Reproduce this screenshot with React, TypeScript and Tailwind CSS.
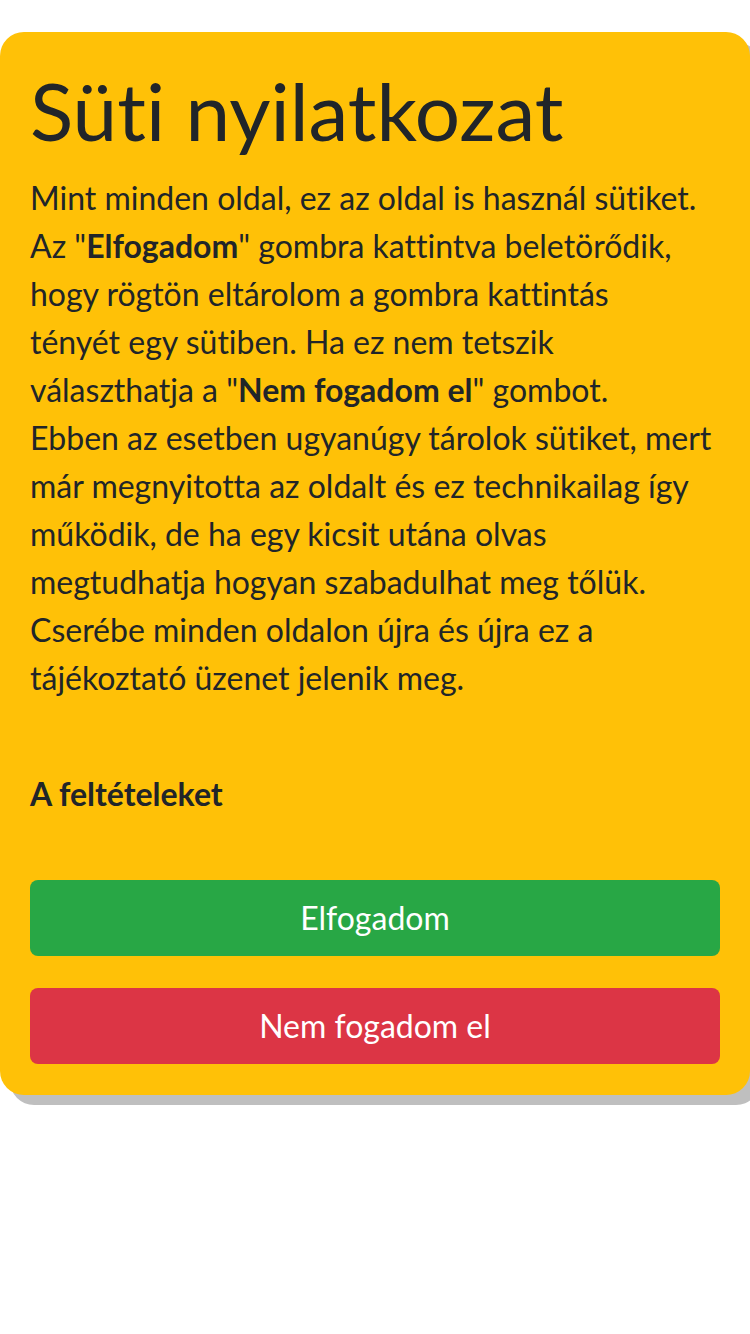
export default function App() {
  return (
    <div className="min-h-[1334px] bg-white pt-8 font-['Lato','Noto_Sans',sans-serif] text-[#212529] [font-variant-ligatures:none]">
      <div className="rounded-3xl bg-[#ffc107] px-[30px] pt-[30px] pb-[31px] shadow-[10px_10px_0_0_#bfbfbf]">
        <h1 className="mb-4 text-[80px] leading-[1.2] font-normal">Süti nyilatkozat</h1>
        <p className="mb-8 text-[32px] leading-[48px]">
          Mint minden oldal, ez az oldal is használ sütiket.
          <br />
          Az "<b>Elfogadom</b>" gombra kattintva beletörődik,
          <br />
          hogy rögtön eltárolom a gombra kattintás
          <br />
          tényét egy sütiben. Ha ez nem tetszik
          <br />
          választhatja a "<b>Nem fogadom el</b>" gombot.
          <br />
          Ebben az esetben ugyanúgy tárolok sütiket, mert
          <br />
          már megnyitotta az oldalt és ez technikailag így
          <br />
          működik, de ha egy kicsit utána olvas
          <br />
          megtudhatja hogyan szabadulhat meg tőlük.
          <br />
          Cserébe minden oldalon újra és újra ez a
          <br />
          tájékoztató üzenet jelenik meg.
        </p>
        <p className="mt-[68px] text-[32px] leading-[48px] font-bold">A feltételeket</p>
        <div className="mt-[62px] flex flex-col gap-8">
          <button className="h-[76px] w-full rounded-lg bg-[#28a745] text-[32px] text-white">Elfogadom</button>
          <button className="h-[76px] w-full rounded-lg bg-[#dc3545] text-[32px] text-white">Nem fogadom el</button>
        </div>
      </div>
    </div>
  );
}
